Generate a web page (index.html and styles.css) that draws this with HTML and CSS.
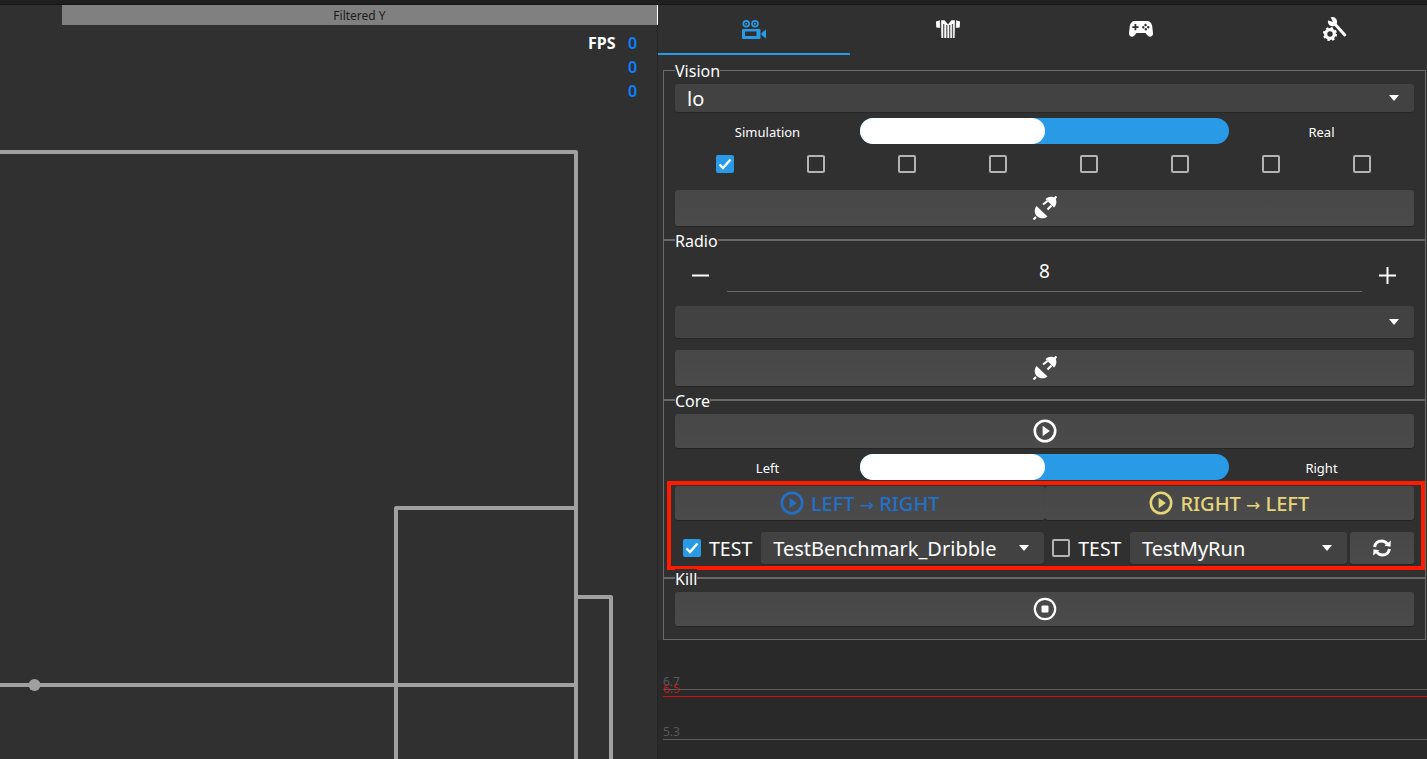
FILE: index.html
```html
<!DOCTYPE html>
<html lang="en">
<head>
<meta charset="utf-8">
<title>Control panel</title>
<link rel="stylesheet" href="styles.css">
</head>
<body>
<svg class="defs" width="0" height="0" aria-hidden="true">
  <defs>
    <symbol id="plug" viewBox="0 0 24 24">
      <path fill="currentColor" d="M3.500 10 14.500 20.500C11 23.500 6.500 22.500 3.800 20 1.500 18 0.800 13.500 3.500 10Z"/>
      <path d="M3 21 0.500 23.500" stroke="currentColor" stroke-width="2"/>
      <path fill="currentColor" d="M12.500 3C16-.5 20.500.5 22 2 23.500 3.500 24.500 8 21 11.500Z"/>
      <path d="M20 4 23.500 0.500M14.500 5 10 8.500M18.500 9.500 14.500 13.500" stroke="currentColor" stroke-width="2.200"/>
    </symbol>
    <symbol id="play" viewBox="0 0 24 24">
      <circle cx="12" cy="12" r="10.200" fill="none" stroke="currentColor" stroke-width="2.600"/>
      <path fill="currentColor" d="M9.600 6.800 16.800 12 9.600 17.200Z"/>
    </symbol>
  </defs>
</svg>
<div class="topstrip"></div>
<main class="app">
  <section class="left">
    <div class="plot-title">Filtered Y</div>
    <div class="canvas">
      <svg class="field" width="657" height="734" viewBox="0 25 657 734">
        <g fill="none" stroke="#a0a0a0" stroke-width="4" stroke-linejoin="round">
          <path d="M-4 152H576V763"/>
          <path d="M396 763V508H576"/>
          <path d="M576 597H611V763"/>
          <path d="M-4 685H576"/>
        </g>
        <circle cx="34.500" cy="685" r="6" fill="#a0a0a0"/>
      </svg>
      <div class="fps">
        <b class="fps-label">FPS</b><span class="fps-val">0</span>
        <span class="fps-val fps-col">0</span>
        <span class="fps-val fps-col">0</span>
      </div>
    </div>
  </section>

  <section class="right">
    <nav class="tabs">
      <div class="tab active">
        <svg width="24" height="19" viewBox="0 0 24 19">
          <g fill="none" stroke="currentColor" stroke-width="1.700">
            <circle cx="4.200" cy="3.800" r="2.900"/><circle cx="13" cy="3.800" r="2.900"/>
          </g>
          <circle cx="4.200" cy="3.800" r="1" fill="currentColor"/><circle cx="13" cy="3.800" r="1" fill="currentColor"/>
          <path fill="currentColor" fill-rule="evenodd" d="M1 9H17.500A1 1 0 0 1 18.500 10V18A1 1 0 0 1 17.500 19H1A1 1 0 0 1 0 18V10A1 1 0 0 1 1 9ZM3 11.500V16H14.500V11.500Z"/>
          <path fill="currentColor" d="M19.500 13 24 9.500V18.500L19.500 15Z"/>
        </svg>
      </div>
      <div class="tab tab-shift">
        <svg width="24" height="18" viewBox="0 0 24 18">
          <path fill="#fff" d="M0 1.500 4 0.300 5 8 0.300 7.500ZM20 0.300 24 1.500 23.700 7.500 19 8ZM5 0.300H19L18.600 18H5.400Z"/>
          <path stroke="#303030" stroke-opacity=".8" stroke-width="1.300" fill="none" d="M4.500 0V8M19.500 0V8M7.700 4V18M10.800 5V18M13.700 5V18M16.500 4V18"/>
          <path fill="#303030" d="M8.500 0 12 4.500 15.500 0Z"/>
        </svg>
      </div>
      <div class="tab tab-shift">
        <svg width="24" height="16" viewBox="0 0 24 16">
          <path fill="#fff" fill-rule="evenodd" d="M6.500 0H17.500C21 0 22.500 2 23.200 5L24 12C24.400 15.500 21 17 18.500 14.500L16.500 12H7.500L5.500 14.500C3 17-.4 15.500 0 12L.8 5C1.500 2 3 0 6.500 0ZM5.500 3V5.200H3.300V7H5.500V9.200H7.300V7H9.500V5.200H7.300V3ZM16.500 2.800A1.200 1.200 0 1 0 16.500 5.200 1.200 1.200 0 0 0 16.500 2.800ZM19.300 5A1.200 1.200 0 1 0 19.300 7.400 1.200 1.200 0 0 0 19.300 5ZM14.300 5A1.200 1.200 0 1 0 14.300 7.400 1.200 1.200 0 0 0 14.300 5ZM16.800 7A1.200 1.200 0 1 0 16.800 9.400 1.200 1.200 0 0 0 16.800 7Z"/>
        </svg>
      </div>
      <div class="tab tab-shift-more">
        <svg width="24" height="24" viewBox="0 0 24 24">
          <circle cx="9.500" cy="4.700" r="4.600" fill="#fff"/>
          <path fill="#303030" d="M10 5 4 3 7-1Z"/>
          <path d="M11 6 21.800 18" stroke="#fff" stroke-width="3" stroke-linecap="round" fill="none"/>
          <circle cx="7" cy="17" r="4.300" fill="none" stroke="#fff" stroke-width="3.200"/>
          <circle cx="7" cy="17" r="6.200" fill="none" stroke="#fff" stroke-width="1.800" stroke-dasharray="2.400 2.470"/>
        </svg>
      </div>
    </nav>

    <div class="groups">
      <section class="group vision">
        <h2 class="legend">Vision</h2>
        <div class="combo combo-big"><span class="combo-text">lo</span><i class="caret"></i></div>
        <div class="switch-row">
          <span class="switch-label">Simulation</span>
          <div class="switch"><div class="knob"></div></div>
          <span class="switch-label">Real</span>
        </div>
        <div class="checks">
          <span class="check on"><svg width="14" height="12" viewBox="0 0 14 12"><path d="M1.500 6.500 5 10 12.500 1.500" fill="none" stroke="#fff" stroke-width="2.400"/></svg></span>
          <span class="check"></span><span class="check"></span><span class="check"></span>
          <span class="check"></span><span class="check"></span><span class="check"></span><span class="check"></span>
        </div>
        <button class="btn btn-plug"><svg class="ico-24" aria-hidden="true"><use href="#plug"/></svg></button>
      </section>

      <section class="group radio">
        <h2 class="legend">Radio</h2>
        <div class="spin">
          <span class="spin-btn">
            <svg width="17" height="17" viewBox="0 0 17 17"><path d="M0 8.500H17" stroke="#fff" stroke-width="2"/></svg>
          </span>
          <div class="spin-value">8</div>
          <span class="spin-btn">
            <svg width="17" height="17" viewBox="0 0 17 17"><path d="M0 8.500H17M8.500 0V17" stroke="#fff" stroke-width="2"/></svg>
          </span>
        </div>
        <div class="combo combo-radio"><i class="caret"></i></div>
        <button class="btn btn-plug2"><svg class="ico-24" aria-hidden="true"><use href="#plug"/></svg></button>
      </section>

      <section class="group core">
        <h2 class="legend">Core</h2>
        <button class="btn btn-play"><svg class="ico-24" aria-hidden="true"><use href="#play"/></svg></button>
        <div class="switch-row switch-row-core">
          <span class="switch-label">Left</span>
          <div class="switch"><div class="knob"></div></div>
          <span class="switch-label">Right</span>
        </div>
        <div class="mark">
          <div class="run-row">
            <button class="btn run run-blue"><svg class="ico-24" aria-hidden="true"><use href="#play"/></svg><span>LEFT <span class="arrow">→</span> RIGHT</span></button>
            <button class="btn run run-yellow"><svg class="ico-24" aria-hidden="true"><use href="#play"/></svg><span>RIGHT <span class="arrow">→</span> LEFT</span></button>
          </div>
          <div class="test-row">
            <span class="check on"><svg width="14" height="12" viewBox="0 0 14 12"><path d="M1.500 6.500 5 10 12.500 1.500" fill="none" stroke="#fff" stroke-width="2.400"/></svg></span>
            <span class="test-label">TEST</span>
            <div class="combo combo-test combo-a"><span class="combo-text">TestBenchmark_Dribble</span><i class="caret"></i></div>
            <span class="check check-b"></span>
            <span class="test-label">TEST</span>
            <div class="combo combo-test combo-c"><span class="combo-text">TestMyRun</span><i class="caret"></i></div>
            <button class="btn refresh">
              <svg width="20" height="18" viewBox="0 0 20 18">
                <path fill="none" stroke="#fff" stroke-width="3" d="M2.600 8C3 4.500 6 2 9.500 2 12 2 14 3.200 15.200 5"/>
                <path fill="#fff" d="M12.500 6.800 18.500 7.800 18.800 1.500Z"/>
                <path fill="none" stroke="#fff" stroke-width="3" d="M17.400 10C17 13.500 14 16 10.500 16 8 16 6 14.800 4.800 13"/>
                <path fill="#fff" d="M7.500 11.200 1.500 10.200 1.200 16.500Z"/>
              </svg>
            </button>
          </div>
        </div>
      </section>

      <section class="group kill">
        <h2 class="legend">Kill</h2>
        <button class="btn btn-kill">
          <svg class="ico-24" viewBox="0 0 24 24" aria-hidden="true">
            <circle cx="12" cy="12" r="10.200" fill="none" stroke="#fff" stroke-width="2.200"/>
            <rect x="8.500" y="8.500" width="7" height="7" rx="1" fill="#fff"/>
          </svg>
        </button>
      </section>
    </div>

    <div class="graph">
      <svg width="769" height="119" viewBox="658 640 769 119">
        <path d="M663 689.500H1427M663 739.500H1427" stroke="#5c5c5c"/>
        <path d="M663 696.500H1427" stroke="#d01010"/>
        <text class="graph-text" x="663" y="686" fill="#585858">6.7</text>
        <text class="graph-text" x="663" y="693" fill="#b02020">6.5</text>
        <text class="graph-text" x="663" y="736" fill="#585858">5.3</text>
      </svg>
    </div>
  </section>
</main>
</body>
</html>
```

FILE: styles.css
```css
* { box-sizing: border-box; }
html, body { height: 100%; margin: 0; }
body {
  background: #303030;
  color: #fff;
  font-family: "Noto Sans", "Open Sans", sans-serif;
  overflow: hidden;
  display: flex;
  flex-direction: column;
}
.defs { position: absolute; }
.topstrip { height: 5px; flex: none; background: #1f1f1f; border-bottom: 1px solid #161616; }
.app { flex: 1; display: flex; min-height: 0; }

/* left: field view */
.left { width: 658px; flex: none; display: flex; flex-direction: column; }
.plot-title {
  height: 20px;
  margin-left: 62px;
  background: #808080;
  border-right: 1px solid #fff;
  color: #1c1c1c;
  font-size: 12px;
  line-height: 21px;
  text-align: center;
}
.canvas { flex: 1; position: relative; border-right: 1px solid #252525; overflow: hidden; }
.field { display: block; }
.fps {
  position: absolute;
  top: 6px;
  left: 588px;
  width: 50px;
  display: grid;
  grid-template-columns: 40px 10px;
  grid-auto-rows: 24px;
  font-size: 16px;
  line-height: 24px;
}
.fps-label { font-weight: 700; color: #fff; }
.fps-val { color: #0a80ff; font-size: 16px; font-weight: 600; }
.fps-col { grid-column: 2; }

/* right: panel */
.right { flex: 1; display: flex; flex-direction: column; min-width: 0; }
.tabs { height: 50px; flex: none; display: grid; grid-template-columns: repeat(4, 1fr); }
.tab { display: flex; align-items: center; justify-content: center; color: #fff; border-bottom: 2px solid transparent; }
.tab-shift { padding-left: 4px; }
.tab-shift-more { padding-left: 8px; }
.tab.active { color: #299ae6; border-bottom-color: #299ae6; }

.groups { margin: 15px 1px 0 5px; flex: none; }
.group { position: relative; border: 1px solid #6a6a6a; padding: 13px 11px 0; }
.legend {
  position: absolute;
  top: -10px;
  left: 11px;
  margin: 0;
  padding: 0;
  background: #303030;
  font-size: 16px;
  font-weight: 400;
  line-height: 20px;
}
.vision { height: 170px; }
.radio { height: 160px; }
.core { height: 178px; }
.kill { height: 62px; }

.combo {
  display: flex;
  align-items: center;
  background: #424242;
  border-radius: 3px;
  box-shadow: 0 1px 1px rgba(0, 0, 0, .2);
}
.combo-big { height: 28px; padding: 0 15px 0 12px; font-size: 20px; }
.combo-radio { height: 32px; margin-top: 14px; padding: 0 15px 0 12px; }
.caret {
  width: 0;
  height: 0;
  margin-left: auto;
  border-left: 5px solid transparent;
  border-right: 5px solid transparent;
  border-top: 6px solid #fff;
}

.switch-row { height: 26px; margin-top: 6px; display: grid; grid-template-columns: 185px 1fr 185px; align-items: center; }
.switch-label { padding-top: 2px; font-size: 13px; text-align: center; }
.switch { height: 26px; background: #299ae6; border-radius: 13px; }
.knob { width: 50%; height: 26px; background: #fff; border-radius: 13px; }

.checks { margin-top: 11px; padding: 0 43px 0 41px; display: flex; justify-content: space-between; }
.check {
  width: 18px;
  height: 18px;
  flex: none;
  display: flex;
  align-items: center;
  justify-content: center;
  border: 2px solid #b4b4b4;
  border-radius: 2px;
}
.check.on { background: #299ae6; border-color: #299ae6; }

.btn {
  width: 100%;
  display: flex;
  align-items: center;
  justify-content: center;
  padding: 0;
  color: #fff;
  background: linear-gradient(#474747, #4b4b4b);
  border: 0;
  border-radius: 3px;
  box-shadow: 0 1px 1px rgba(0, 0, 0, .25);
  font-family: inherit;
}
.ico-24 { width: 24px; height: 24px; flex: none; }
.btn-plug { height: 36px; margin-top: 17px; }
.btn-plug2 { height: 36px; margin-top: 12px; }
.btn-play, .btn-kill { height: 34px; }

.spin { height: 38px; display: flex; align-items: flex-start; }
.spin-btn { width: 52px; height: 38px; flex: none; display: flex; align-items: center; justify-content: center; padding: 4px 1px 0 0; }
.spin-value {
  flex: 1;
  height: 38px;
  border-bottom: 1px solid #6a6a6a;
  font-size: 19px;
  line-height: 34px;
  text-align: center;
}

.mark {
  margin: 1px -11px 0 -8px;
  padding: 1px 7px 0 4px;
  height: 89px;
  border: 4px solid #ff1a00;
}
.run-row { display: flex; }
.run { height: 34px; gap: 7px; font-size: 20px; font-weight: 500; }
.arrow { font-family: "DejaVu Sans", sans-serif; font-size: 17px; font-weight: 400; }
.run-blue { color: #2470c8; }
.run-yellow { color: #e6d67a; }

.test-row { margin-top: 12px; display: flex; align-items: center; height: 32px; padding-left: 8px; font-size: 19.500px; }
.test-label { margin-left: 8px; }
.combo-test { height: 32px; padding: 0 15px 0 12px; font-size: 20px; }
.combo-a { width: 283px; margin-left: 9px; flex: none; }
.check-b { margin-left: 8px; }
.combo-c { width: 217px; margin-left: 8.500px; flex: none; }
.refresh { width: 64px; height: 32px; margin-left: 3px; flex: none; }

.graph { flex: 1; background: #292929; min-height: 0; }
.graph svg { display: block; }
.graph-text { font-size: 12px; font-family: "Noto Sans", sans-serif; }
```
